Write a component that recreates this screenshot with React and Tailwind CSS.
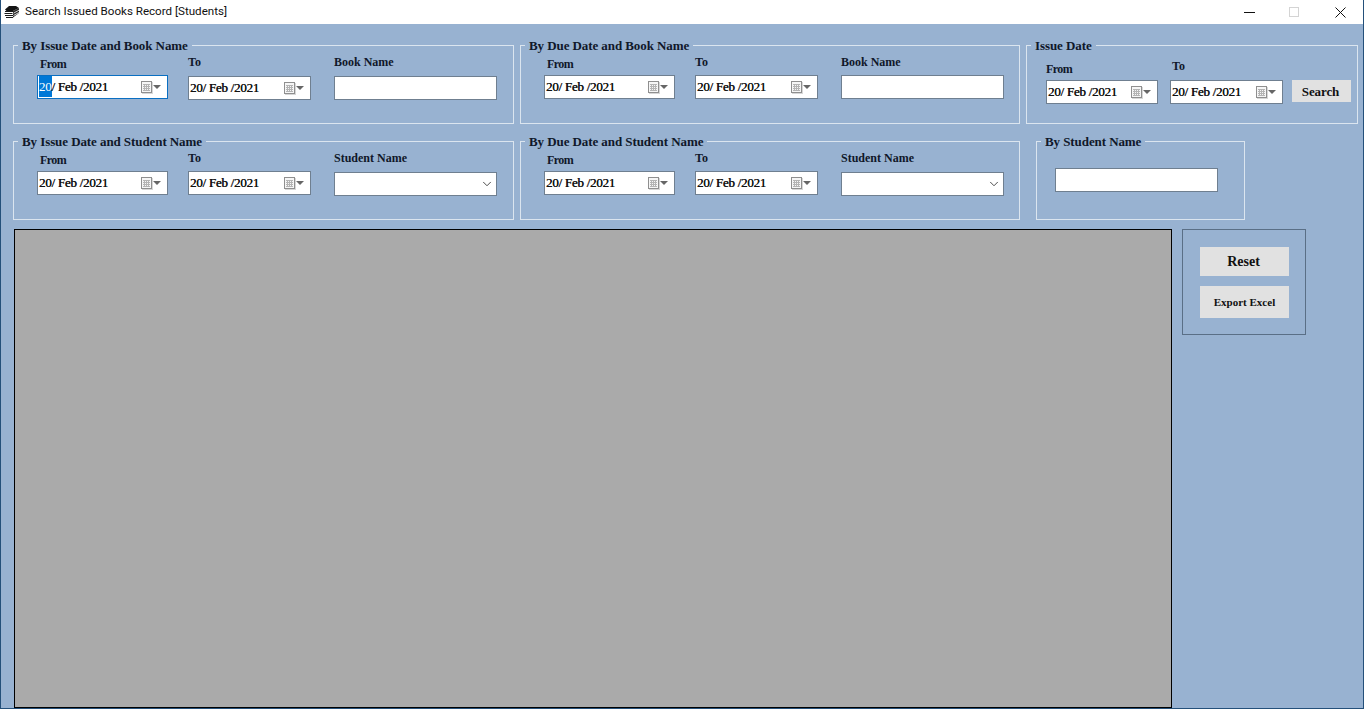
import { ChevronDown } from "lucide-react";

// ── Small drawn icons ─────────────────────────────────────────────────────────
function BooksIcon() {
  return (
    <svg width="16" height="12" viewBox="0 0 16 12" className="shrink-0">
      <path d="M5 0h7l3 2-6 3H2.500L1 3.500z" fill="#141414" />
      <path d="M9 5l6-3v5l-6 4.500z" fill="#2b2b2b" />
      <path d="M1 5.500h8M.5 7.500h8M1 9.500h8M2 11.500h7" stroke="#1a1a1a" strokeWidth="1.100" />
      <path d="M9.500 7.200l5.500-3M9.500 9.500l5.500-3" stroke="#fff" strokeWidth="0.800" />
    </svg>
  );
}

function CalendarIcon() {
  return (
    <svg width="12" height="13" viewBox="0 0 12 13" className="shrink-0">
      <rect x="1" y="1" width="11" height="12" fill="#b0b0b0" opacity="0.5" />
      <rect x="0.500" y="0.500" width="10" height="11" fill="#f6f6f6" stroke="#8f8f8f" />
      <path
        d="M2 3.500h7M2 5.500h7M2 7.500h7M2 9.500h7M3.500 3v7M5.500 3v7M7.500 3v7"
        stroke="#b4b4b4"
        strokeWidth="1"
      />
    </svg>
  );
}

// ── Form controls ─────────────────────────────────────────────────────────────
function DateBox({ className = "", focused = false }) {
  return (
    <div
      className={`${className} h-6 flex items-center bg-white pl-px pr-[6px] border text-[13px] tracking-[-0.25px] text-[#111] [text-shadow:0.3px_0_0_#111] ${
        focused ? "border-[#0a6fc2]" : "border-[#6f7f90]"
      }`}
    >
      <span className="flex-1 whitespace-nowrap leading-none pb-[2px]">
        {focused ? (
          <span className="bg-[#0078d7] text-white py-[3px] [text-shadow:none]">20</span>
        ) : (
          "20"
        )}
        / Feb /2021
      </span>
      <CalendarIcon />
      <span className="w-0 h-0 border-x-[4px] border-x-transparent border-t-[4px] border-t-[#666]" />
    </div>
  );
}

function TextBox({ className = "" }) {
  return <div className={`${className} h-6 bg-white border border-[#6f7f90]`} />;
}

function SelectBox() {
  return (
    <div className="w-[163px] h-6 flex items-center justify-end pr-[2px] bg-white border border-[#6f7f90]">
      <ChevronDown size={14} strokeWidth={1.5} className="text-[#333]" />
    </div>
  );
}

function Field({ label, className = "", labelClass = "", children }) {
  return (
    <div className={`${className} flex flex-col items-start`}>
      <label className={`${labelClass} h-[14px] leading-[14px] text-[12px] font-bold text-[#10182a] whitespace-nowrap`}>
        {label}
      </label>
      {children}
    </div>
  );
}

function Group({ title, className = "", children }) {
  return (
    <fieldset className={`${className} h-[88px] border border-[#dbe5ef] flex items-start`}>
      <legend className="ml-[4px] px-[4px] h-[18px] leading-[20px] text-[13px] tracking-[-0.08px] font-bold text-[#10182a] whitespace-nowrap">
        {title}
      </legend>
      <div className="flex items-start">{children}</div>
    </fieldset>
  );
}

// ── Group bodies ──────────────────────────────────────────────────────────────
function DatePair({ focused, toGap = "mb-[6px]" }) {
  return (
    <>
      <Field label="From" className="ml-[23px] mt-[3px]" labelClass="pl-[3px] mb-[4px] tracking-[-0.6px]">
        <DateBox className="w-[131px]" focused={focused} />
      </Field>
      <Field label="To" className="ml-[20px] mt-px" labelClass={toGap}>
        <DateBox className="w-[123px]" />
      </Field>
    </>
  );
}

export default function App() {
  return (
    <div className="h-screen flex flex-col overflow-hidden border-x border-b border-[#24507a] bg-[#98b2d1] font-['Liberation_Serif',serif]">
      {/* Title bar */}
      <div className="h-6 -mx-px shrink-0 flex items-center bg-white pl-[4px] font-['Roboto',sans-serif]">
        <BooksIcon />
        <span className="ml-[5px] text-[11.6px] text-[#111] whitespace-nowrap">
          Search Issued Books Record [Students]
        </span>
        <div className="ml-auto flex items-center">
          <div className="w-[11px] h-px bg-[#111]" />
          <div className="ml-[34px] w-[10px] h-[10px] border border-[#d4d4d4]" />
          <svg width="11" height="11" viewBox="0 0 11 11" className="ml-[36px] mr-[18px]">
            <path d="M.5.5l10 10M10.500.5l-10 10" stroke="#111" strokeWidth="1" />
          </svg>
        </div>
      </div>

      {/* First row of filters */}
      <div className="flex mt-[12px] ml-[12px]">
        <Group title="By Issue Date and Book Name" className="w-[501px]">
          <DatePair focused toGap="mb-[7px]" />
          <Field label="Book Name" className="ml-[23px] mt-px" labelClass="mb-[7px]">
            <TextBox className="w-[163px]" />
          </Field>
        </Group>
        <Group title="By Due Date and Book Name" className="w-[500px] ml-[6px]">
          <DatePair />
          <Field label="Book Name" className="ml-[23px] mt-px" labelClass="mb-[6px]">
            <TextBox className="w-[163px]" />
          </Field>
        </Group>
        <Group title="Issue Date" className="w-[332px] ml-[6px]">
          <Field label="From" className="ml-[19px] mt-[8px]" labelClass="mb-[4px] tracking-[-0.6px]">
            <DateBox className="w-[112px]" />
          </Field>
          <Field label="To" className="ml-[12px] mt-[5px]" labelClass="pl-[2px] mb-[7px]">
            <DateBox className="w-[113px]" />
          </Field>
          <button className="ml-[9px] mt-[26px] w-[59px] h-[22px] pt-[2px] pr-[2px] bg-[#e1e1e1] text-[13px] tracking-[-0.1px] font-bold text-[#111]">
            Search
          </button>
        </Group>
      </div>

      {/* Second row of filters */}
      <div className="flex mt-[8px] ml-[12px]">
        <Group title="By Issue Date and Student Name" className="w-[501px]">
          <DatePair />
          <Field label="Student Name" className="ml-[23px] mt-px" labelClass="mb-[7px]">
            <SelectBox />
          </Field>
        </Group>
        <Group title="By Due Date and Student Name" className="w-[500px] ml-[6px]">
          <DatePair />
          <Field label="Student Name" className="ml-[23px] mt-px" labelClass="mb-[7px]">
            <SelectBox />
          </Field>
        </Group>
        <Group title="By Student Name" className="w-[209px] ml-[16px]">
          <TextBox className="w-[163px] ml-[18px] mt-[18px]" />
        </Group>
      </div>

      {/* Results grid and actions */}
      <div className="flex flex-1 min-h-0 mt-[9px] ml-[13px]">
        <div className="w-[1158px] bg-[#aaaaaa] border border-black" />
        <div className="ml-[10px] w-[124px] h-[106px] border border-[#5a6f86] flex flex-col items-center pt-[17px] pl-px">
          <button className="w-[89px] h-[29px] pr-[2px] bg-[#e1e1e1] text-[14px] font-bold text-[#111]">
            Reset
          </button>
          <button className="mt-[10px] w-[89px] h-[32px] bg-[#e1e1e1] text-[11px] font-bold text-[#111]">
            Export Excel
          </button>
        </div>
      </div>
    </div>
  );
}
